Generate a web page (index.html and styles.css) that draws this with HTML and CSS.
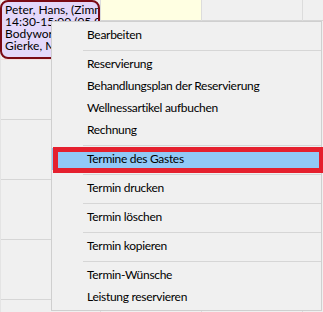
FILE: index.html
```html
<!DOCTYPE html>
<html>
<head>
    <title>Terminplan</title>
    <link rel="stylesheet" href="styles.css">
</head>
<body>
    <div class="planner">
        <div class="column first">
            <div class="slot booked">
                <div class="appointment">
                    Peter, Hans, (Zimmer 12)<br>
                    14:30-15:00 (05.04.)<br>
                    Bodywork<br>
                    Gierke, M.
                </div>
            </div>
            <div class="slot"></div>
            <div class="slot"></div>
            <div class="slot"></div>
            <div class="slot"></div>
        </div>
        <div class="column">
            <div class="head today"></div>
        </div>
        <div class="column">
            <div class="head"></div>
        </div>
        <div class="column">
            <div class="head"></div>
        </div>
    </div>

    <ul class="menu">
        <li>Bearbeiten</li>
        <li class="sep"></li>
        <li>Reservierung</li>
        <li>Behandlungsplan der Reservierung</li>
        <li>Wellnessartikel aufbuchen</li>
        <li>Rechnung</li>
        <li class="sep"></li>
        <li class="active">Termine des Gastes</li>
        <li class="sep"></li>
        <li>Termin drucken</li>
        <li class="sep"></li>
        <li>Termin löschen</li>
        <li class="sep"></li>
        <li>Termin kopieren</li>
        <li class="sep"></li>
        <li>Termin-Wünsche</li>
        <li>Leistung reservieren</li>
    </ul>
</body>
</html>
```

FILE: styles.css
```css
body {
    margin: 0;
    width: 323px;
    height: 312px;
    overflow: hidden;
    position: relative;
    background: #f0f0f0;
    font-family: Lato, "Liberation Sans", sans-serif;
    font-size: 12px;
    color: #000;
}
.planner {
    display: flex;
    height: 312px;
}
.column {
    width: 100px;
    flex-shrink: 0;
    border-right: 1px solid #dcdcdc;
}
.column.first {
    border-left: 1px solid #e4e4e4;
    width: 99px;
}
.slot {
    height: 59px;
    border-bottom: 1px solid #d6d6d6;
}
.slot.booked {
    border-bottom-color: #f3dede;
}
.appointment {
    height: 53px;
    margin-left: -1px;
    padding: 2px 0 0 3px;
    background: #e4d8fa;
    border: 2px solid #7a0a14;
    border-radius: 8px;
    line-height: 12px;
    white-space: nowrap;
    overflow: hidden;
}
.head {
    height: 20px;
    border-bottom: 1px solid #d6d6d6;
}
.head.today {
    background: #ffffe2;
}
.menu {
    position: absolute;
    left: 51px;
    top: 21px;
    width: 269px;
    margin: 0;
    padding: 2px 0;
    list-style: none;
    background: #f0f0f0;
    border: 1px solid #cfcfcf;
    letter-spacing: -0.3px;
}
.menu li {
    height: 22px;
    line-height: 22px;
    padding-left: 35px;
    white-space: nowrap;
}
.menu li.sep {
    height: 1px;
    margin: 4px 0 2px 31px;
    padding: 0;
    background: #d6d6d6;
}
.menu li.active {
    position: relative;
    background: #91c9f7;
}
.menu li.active::after {
    content: "";
    position: absolute;
    left: 1px;
    top: -1px;
    right: -3px;
    bottom: -3px;
    border: 5px solid #e5202e;
}
```
